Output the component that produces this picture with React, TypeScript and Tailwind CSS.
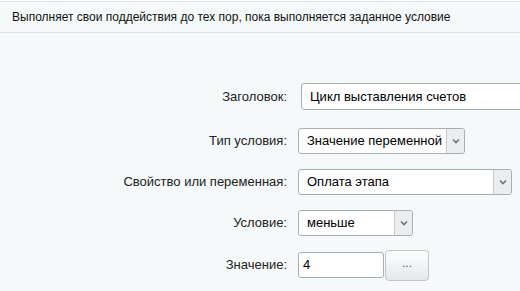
import React from 'react';

const Arrow: React.FC = () => (
    <span className="flex w-[18px] self-stretch items-center justify-center border-l border-[#c4c9cc] bg-[#ebedee] rounded-r-[3px]">
        <svg width="8" height="6" viewBox="0 0 8 6">
            <path d="M1 1.5 L4 4.5 L7 1.5" fill="none" stroke="#6b7378" strokeWidth="1.6" />
        </svg>
    </span>
);

const Select: React.FC<{ value: string; width: string }> = ({ value, width }) => (
    <div className={`flex items-center h-[26px] bg-white border border-[#a7afb3] rounded-[3px] ${width}`}>
        <span className="flex-1 pl-[8px] text-[13px] text-black truncate">{value}</span>
        <Arrow />
    </div>
);

const Row: React.FC<{ label: string; children: React.ReactNode; className?: string }> = ({ label, children, className }) => (
    <div className={`flex items-center ${className ?? ''}`}>
        <label className="w-[288px] shrink-0 pr-[1px] text-right text-[13px] text-[#222]">{label}</label>
        <div className="flex items-center pl-[10px] shrink-0">{children}</div>
    </div>
);

export default function App() {
    return (
        <div className="w-[520px] h-[291px] overflow-hidden bg-white" style={{ fontFamily: '"Liberation Sans", Arial, sans-serif' }}>
            <div className="mt-px h-[290px] bg-[#f5f9f9] border-t border-[#dde4e6]">
                {/* header */}
                <div className="h-[31px] flex items-center pl-[12px] border-b border-[#d8e1e4] text-[12px] text-[#111]">
                    Выполняет свои поддействия до тех пор, пока выполняется заданное условие
                </div>

                <div className="pt-[50px]">
                    <Row label="Заголовок:" className="h-[27px]">
                        <div className="ml-[3px] flex items-center h-[27px] w-[240px] bg-white border border-[#a7afb3] rounded-l-[3px] pl-[8px] text-[13px] text-black">
                            Цикл выставления счетов
                        </div>
                    </Row>

                    <Row label="Тип условия:" className="mt-[18px] h-[26px]">
                        <Select value="Значение переменной" width="w-[167px]" />
                    </Row>

                    <Row label="Свойство или переменная:" className="mt-[15px] h-[26px]">
                        <Select value="Оплата этапа" width="w-[214px]" />
                    </Row>

                    <Row label="Условие:" className="mt-[15px] h-[26px]">
                        <Select value="меньше" width="w-[115px]" />
                    </Row>

                    <Row label="Значение:" className="mt-[16px] h-[26px]">
                        <div className="flex items-center h-[26px] w-[86px] bg-white border border-[#a7afb3] rounded-[3px] pl-[4px] text-[13px] text-black">
                            4
                        </div>
                        <button
                            type="button"
                            className="ml-[1px] h-[31px] w-[44px] flex items-center justify-center rounded-[4px] border border-[#bfc6ca] bg-gradient-to-b from-white to-[#e2e8eb] text-[12px] text-[#555] leading-none pb-[4px]"
                        >
                            ...
                        </button>
                    </Row>
                </div>
            </div>
        </div>
    );
}
